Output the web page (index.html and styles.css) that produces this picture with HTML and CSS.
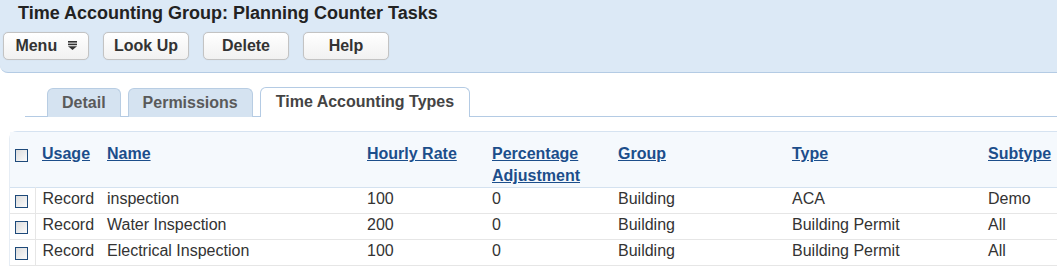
FILE: index.html
```html
<!DOCTYPE html>
<html lang="en">
<head>
    <meta charset="UTF-8">
    <title>Time Accounting Group</title>
    <link rel="stylesheet" href="styles.css">
</head>
<body>
    <header class="page-header">
        <h1>Time Accounting Group: Planning Counter Tasks</h1>
        <div class="toolbar">
            <button class="btn">Menu
                <svg class="menu-icon" width="9" height="9" viewBox="0 0 9 9">
                    <rect x="0" y="0" width="9" height="1.6" fill="#333"/>
                    <rect x="0" y="2.6" width="9" height="1.6" fill="#333"/>
                    <polygon points="0,5.2 9,5.2 4.5,9" fill="#333"/>
                </svg>
            </button>
            <button class="btn">Look Up</button>
            <button class="btn">Delete</button>
            <button class="btn">Help</button>
        </div>
    </header>

    <nav class="tabs">
        <a class="tab">Detail</a>
        <a class="tab">Permissions</a>
        <a class="tab active">Time Accounting Types</a>
    </nav>

    <div class="grid">
        <table>
            <colgroup>
                <col style="width:25px">
                <col style="width:65px">
                <col style="width:260px">
                <col style="width:125px">
                <col style="width:126px">
                <col style="width:174px">
                <col style="width:196px">
                <col>
            </colgroup>
            <thead>
                <tr>
                    <th class="check"><span class="box"></span></th>
                    <th><a href="#">Usage</a></th>
                    <th><a href="#">Name</a></th>
                    <th><a href="#">Hourly Rate</a></th>
                    <th><a href="#">Percentage Adjustment</a></th>
                    <th><a href="#">Group</a></th>
                    <th><a href="#">Type</a></th>
                    <th><a href="#">Subtype</a></th>
                </tr>
            </thead>
            <tbody>
                <tr>
                    <td class="check"><span class="box"></span></td>
                    <td>Record</td>
                    <td>inspection</td>
                    <td>100</td>
                    <td>0</td>
                    <td>Building</td>
                    <td>ACA</td>
                    <td>Demo</td>
                </tr>
                <tr>
                    <td class="check"><span class="box"></span></td>
                    <td>Record</td>
                    <td>Water Inspection</td>
                    <td>200</td>
                    <td>0</td>
                    <td>Building</td>
                    <td>Building Permit</td>
                    <td>All</td>
                </tr>
                <tr>
                    <td class="check"><span class="box"></span></td>
                    <td>Record</td>
                    <td>Electrical Inspection</td>
                    <td>100</td>
                    <td>0</td>
                    <td>Building</td>
                    <td>Building Permit</td>
                    <td>All</td>
                </tr>
            </tbody>
        </table>
    </div>
</body>
</html>
```

FILE: styles.css
```css
* {
    font-family: Arial, "Liberation Sans", sans-serif;
    box-sizing: border-box;
}

body {
    margin: 0;
    overflow: hidden;
    background: #fff;
}

.page-header {
    background-color: #dce9f6;
    border-bottom: 1px solid #b4cbe4;
    border-bottom-left-radius: 8px;
    height: 73px;
    padding: 3px 0 0 18px;
}

.page-header h1 {
    margin: 0;
    font-size: 18px;
    line-height: 20px;
    color: #222;
}

.toolbar {
    display: flex;
    gap: 14px;
    margin: 9px 0 0 -15px;
}

.btn {
    width: 86px;
    height: 28px;
    padding: 0;
    background: linear-gradient(#ffffff, #f1f1f1);
    border: 1px solid #c3c3c3;
    border-radius: 5px;
    box-shadow: 0 0 1px rgba(0, 0, 0, 0.15);
    color: #333;
    font-size: 16px;
    font-weight: bold;
    cursor: pointer;
}

.menu-icon {
    margin-left: 6px;
    vertical-align: 1px;
}

.tabs {
    display: flex;
    gap: 7px;
    margin: 15px 0 0 25px;
    padding-left: 22px;
    border-bottom: 1px solid #b4cbe4;
    height: 29px;
    align-items: flex-end;
}

.tab {
    height: 29px;
    padding: 0 14px;
    margin-bottom: -1px;
    background: #d5e3f1;
    border: 1px solid #b8cde3;
    border-bottom: none;
    border-radius: 6px 6px 0 0;
    color: #5a5a5a;
    font-size: 16px;
    font-weight: bold;
    line-height: 28px;
}

.tab.active {
    background: #fff;
    color: #444;
    border-color: #b4cbe4;
    height: 30px;
    padding: 0 15px;
}

.grid {
    margin: 14px 0 0 9px;
    width: 1100px;
    border-top: 1px solid #d6e3f1;
    border-left: 1px solid #e6edf5;
    border-top-left-radius: 8px;
}

table {
    width: 100%;
    table-layout: fixed;
    border-collapse: collapse;
}

thead tr {
    background: #f5f9fd;
    border-bottom: 1px solid #d4e2f0;
}

th {
    height: 54px;
    padding: 11px 0 0 7px;
    text-align: left;
    vertical-align: top;
    font-size: 16px;
    line-height: 22px;
}

th a {
    color: #1c4e8b;
    text-decoration: underline;
}

td {
    height: 26px;
    padding: 1px 0 0 7px;
    vertical-align: top;
    font-size: 16px;
    line-height: 19px;
    color: #333;
    border-bottom: 1px solid #e6e6e6;
}

.check {
    padding: 0 0 0 5px;
}

th.check {
    padding-top: 17px;
}

td.check {
    border-right: 1px solid #e6e6e6;
    padding-top: 7px;
}

.box {
    display: block;
    width: 13px;
    height: 13px;
    border: 1px solid #1e4a7a;
    background: linear-gradient(135deg, #dcdcdc, #fbfbfb);
}
```
